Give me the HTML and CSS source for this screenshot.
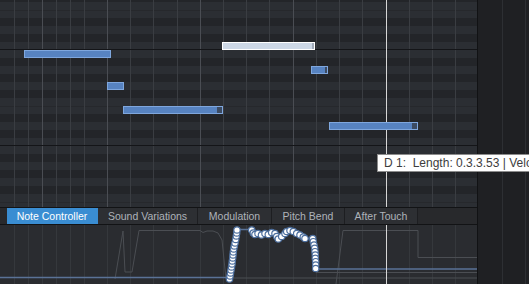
FILE: index.html
```html
<!DOCTYPE html>
<html>
<head>
<meta charset="utf-8">
<link rel="stylesheet" href="styles.css">
</head>
<body>
<div class="app">
  <div class="main">
    <div class="roll">
      <svg class="grid" width="477" height="207" viewBox="0 0 477 207">
        <rect x="0" y="0" width="477" height="207" fill="#2b2e33"/>
        <g fill="#232529">
          <rect x="0" y="0" width="477" height="2"/>
          <rect x="0" y="18" width="477" height="8"/>
          <rect x="0" y="34" width="477" height="8"/>
          <rect x="0" y="58" width="477" height="8"/>
          <rect x="0" y="74" width="477" height="8"/>
          <rect x="0" y="90" width="477" height="8"/>
          <rect x="0" y="114" width="477" height="8"/>
          <rect x="0" y="130" width="477" height="8"/>
          <rect x="0" y="154" width="477" height="8"/>
          <rect x="0" y="170" width="477" height="8"/>
          <rect x="0" y="186" width="477" height="8"/>
        </g>
        <g fill="#26282c">
          <rect x="0" y="10" width="477" height="1"/>
          <rect x="0" y="106" width="477" height="1"/>
          <rect x="0" y="202" width="477" height="1"/>
        </g>
        <g fill="#3a3d42">
          <rect x="14" y="0" width="1" height="207"/>
          <rect x="28" y="0" width="1" height="207"/>
          <rect x="56" y="0" width="1" height="207"/>
          <rect x="70" y="0" width="1" height="207"/>
          <rect x="84" y="0" width="1" height="207"/>
          <rect x="130" y="0" width="1" height="207"/>
          <rect x="153" y="0" width="1" height="207"/>
          <rect x="177" y="0" width="1" height="207"/>
          <rect x="223" y="0" width="1" height="207"/>
          <rect x="246" y="0" width="1" height="207"/>
          <rect x="269" y="0" width="1" height="207"/>
          <rect x="316" y="0" width="1" height="207"/>
          <rect x="339" y="0" width="1" height="207"/>
          <rect x="362" y="0" width="1" height="207"/>
          <rect x="409" y="0" width="1" height="207"/>
          <rect x="432" y="0" width="1" height="207"/>
          <rect x="455" y="0" width="1" height="207"/>
        </g>
        <g fill="#4a4d53">
          <rect x="42" y="0" width="1" height="207"/>
          <rect x="107" y="0" width="1" height="207"/>
          <rect x="200" y="0" width="1" height="207"/>
          <rect x="293" y="0" width="1" height="207"/>
        </g>
        <g fill="#141518">
          <rect x="0" y="49" width="477" height="1"/>
          <rect x="0" y="145" width="477" height="1"/>
        </g>
        <rect x="386" y="0" width="1" height="207" fill="#d6d6d6"/>
      </svg>
      <div class="note" style="left:24px;top:50px;width:87px"></div>
      <div class="note" style="left:107px;top:82px;width:17px"></div>
      <div class="note selected" style="left:222px;top:42px;width:93px"></div>
      <div class="note end-thin" style="left:311px;top:66px;width:17px"></div>
      <div class="note end" style="left:123px;top:106px;width:100px"></div>
      <div class="note end" style="left:329px;top:122px;width:89px"></div>
    </div>
    <div class="sep"></div>
    <div class="tabs">
      <div class="tab active" style="width:91px">Note Controller</div>
      <div class="tab" style="width:100px">Sound Variations</div>
      <div class="tab" style="width:74px">Modulation</div>
      <div class="tab" style="width:73px">Pitch Bend</div>
      <div class="tab" style="width:73px">After Touch</div>
    </div>
    <div class="sep"></div>
    <div class="lane">
      <svg class="lane-svg" width="477" height="59" viewBox="0 225 477 59">
        <rect x="0" y="225" width="477" height="59" fill="#2a2c30"/>
        <g fill="#35383c">
          <rect x="14" y="225" width="1" height="59"/>
          <rect x="28" y="225" width="1" height="59"/>
          <rect x="42" y="225" width="1" height="59"/>
          <rect x="56" y="225" width="1" height="59"/>
          <rect x="70" y="225" width="1" height="59"/>
          <rect x="84" y="225" width="1" height="59"/>
          <rect x="107" y="225" width="1" height="59"/>
          <rect x="130" y="225" width="1" height="59"/>
          <rect x="153" y="225" width="1" height="59"/>
          <rect x="177" y="225" width="1" height="59"/>
          <rect x="200" y="225" width="1" height="59"/>
          <rect x="223" y="225" width="1" height="59"/>
          <rect x="246" y="225" width="1" height="59"/>
          <rect x="269" y="225" width="1" height="59"/>
          <rect x="293" y="225" width="1" height="59"/>
          <rect x="316" y="225" width="1" height="59"/>
          <rect x="339" y="225" width="1" height="59"/>
          <rect x="362" y="225" width="1" height="59"/>
          <rect x="409" y="225" width="1" height="59"/>
          <rect x="432" y="225" width="1" height="59"/>
          <rect x="455" y="225" width="1" height="59"/>
        </g>
        <g fill="none" stroke="#4b4e53" stroke-width="1">
          <polyline points="115,279 123,231 125,272 132,272 139,230.5 200,230.5 203,232.5 207,231 213,231 218,233 222,240 226,279"/>
          <polyline points="336,284 343,230.5 418,230.5 418,257.5 477,257.5"/>
          <line x1="316" y1="272.5" x2="477" y2="272.5"/>
          <line x1="229" y1="278" x2="477" y2="278"/>
        </g>
        <polyline fill="none" stroke="#5a7296" stroke-width="1.6" points="0,277.5 229.5,277.5 230,276 231,270 232,264 233,255 234.3,246 235.7,239.5 237,229.5 250,229.5 251.7,230 255,234.5 261.5,235 268.3,234.5 275,233.5 278.3,239 285,233.5 290,230.5 296.7,233.5 305,238.5 312.7,238.5 314,245 315,251.7 315.7,261.7 315.7,269 477,269"/>
        <rect x="386" y="225" width="1" height="59" fill="#d6d6d6"/>
        <g fill="#ffffff" stroke="#4d6f9e" stroke-width="1.2">
          <circle cx="229.5" cy="279" r="3.2"/>
          <circle cx="230" cy="276" r="3.2"/>
          <circle cx="230.5" cy="273" r="3.2"/>
          <circle cx="231" cy="270" r="3.2"/>
          <circle cx="231.5" cy="267" r="3.2"/>
          <circle cx="232" cy="264" r="3.2"/>
          <circle cx="232.3" cy="261" r="3.2"/>
          <circle cx="232.7" cy="258" r="3.2"/>
          <circle cx="233" cy="255" r="3.2"/>
          <circle cx="233.3" cy="252" r="3.2"/>
          <circle cx="233.7" cy="249" r="3.2"/>
          <circle cx="234.3" cy="246" r="3.2"/>
          <circle cx="235" cy="243" r="3.2"/>
          <circle cx="235.7" cy="239.5" r="3.2"/>
          <circle cx="236.3" cy="236" r="3.2"/>
          <circle cx="236.7" cy="233" r="3.2"/>
          <circle cx="237" cy="230" r="3.2"/>
          <circle cx="251.7" cy="230" r="3.2"/>
          <circle cx="253.3" cy="233" r="3.2"/>
          <circle cx="255" cy="234.5" r="3.2"/>
          <circle cx="258" cy="233.5" r="3.2"/>
          <circle cx="261.5" cy="235" r="3.2"/>
          <circle cx="265" cy="233.5" r="3.2"/>
          <circle cx="268.3" cy="234.5" r="3.2"/>
          <circle cx="271.7" cy="232.5" r="3.2"/>
          <circle cx="275" cy="233.5" r="3.2"/>
          <circle cx="276.7" cy="236.5" r="3.2"/>
          <circle cx="278.3" cy="239" r="3.2"/>
          <circle cx="281.7" cy="236.5" r="3.2"/>
          <circle cx="285" cy="233.5" r="3.2"/>
          <circle cx="286.7" cy="231.5" r="3.2"/>
          <circle cx="290" cy="230.5" r="3.2"/>
          <circle cx="293.3" cy="231.5" r="3.2"/>
          <circle cx="296.7" cy="233.5" r="3.2"/>
          <circle cx="300" cy="235" r="3.2"/>
          <circle cx="303.3" cy="237" r="3.2"/>
          <circle cx="305" cy="238.5" r="3.2"/>
          <circle cx="312.7" cy="238.5" r="3.2"/>
          <circle cx="313.3" cy="241.7" r="3.2"/>
          <circle cx="314" cy="245" r="3.2"/>
          <circle cx="314.7" cy="248.3" r="3.2"/>
          <circle cx="315" cy="251.7" r="3.2"/>
          <circle cx="315.3" cy="255" r="3.2"/>
          <circle cx="315.3" cy="258.3" r="3.2"/>
          <circle cx="315.7" cy="261.7" r="3.2"/>
          <circle cx="315.7" cy="265" r="3.2"/>
          <circle cx="315.7" cy="268.5" r="3.2"/>
        </g>
      </svg>
    </div>
  </div>
  <div class="side">
    <div class="col c1"></div>
    <div class="col c2"></div>
  </div>
  <div class="tooltip">D 1:  Length: 0.3.3.53 | Velocity: 100</div>
</div>
</body>
</html>
```

FILE: styles.css
```css
html, body {
  margin: 0;
  padding: 0;
  background: #1f2023;
  overflow: hidden;
}
.app {
  position: relative;
  width: 529px;
  height: 284px;
  display: flex;
  overflow: hidden;
  font-family: "Liberation Sans", Arial, sans-serif;
}
.main {
  width: 477px;
  display: flex;
  flex-direction: column;
}
.roll {
  position: relative;
  height: 207px;
  overflow: hidden;
}
.grid, .lane-svg {
  display: block;
}
.sep {
  height: 1px;
  background: #121315;
}
.note {
  position: absolute;
  height: 8px;
  box-sizing: border-box;
  background: #5783c1;
  border: 1px solid #7fa7de;
}
.note.selected {
  background: #cdd8e6;
  border-color: #ffffff;
}
.note.selected::after {
  content: "";
  position: absolute;
  right: 0;
  top: 0;
  bottom: 0;
  width: 2px;
  background: #a2acba;
}
.note.end::after {
  content: "";
  position: absolute;
  right: 0;
  top: 0;
  bottom: 0;
  width: 5px;
  background: #3c4b62;
}
.note.end-thin::after {
  content: "";
  position: absolute;
  right: 0;
  top: 0;
  bottom: 0;
  width: 2px;
  background: #3c4b62;
}
.tabs {
  height: 16px;
  display: flex;
  padding-left: 7px;
  background: #28292c;
}
.tab {
  box-sizing: border-box;
  height: 16px;
  line-height: 16px;
  text-align: center;
  font-size: 10.5px;
  color: #aeb3ba;
  background: #2d2f33;
  border-right: 1px solid #1d1e21;
  white-space: nowrap;
}
.tab.active {
  background: #3a8dd2;
  color: #ffffff;
  border-right-color: #3a8dd2;
}
.lane {
  height: 59px;
  position: relative;
  overflow: hidden;
}
.side {
  width: 52px;
  box-sizing: border-box;
  border-left: 1px solid #111214;
  display: flex;
  background: #1f2023;
}
.col {
  box-sizing: border-box;
  height: 100%;
  border-right: 1px solid #2d2f33;
}
.c1 { width: 25px; }
.c2 { width: 23px; }
.tooltip {
  position: absolute;
  left: 377px;
  top: 154px;
  height: 18px;
  box-sizing: border-box;
  padding-left: 6px;
  padding-right: 6px;
  background: #ffffff;
  border: 1px solid #8c8c8c;
  font-size: 12px;
  line-height: 16px;
  color: #3d3d3d;
  white-space: pre;
}
```
